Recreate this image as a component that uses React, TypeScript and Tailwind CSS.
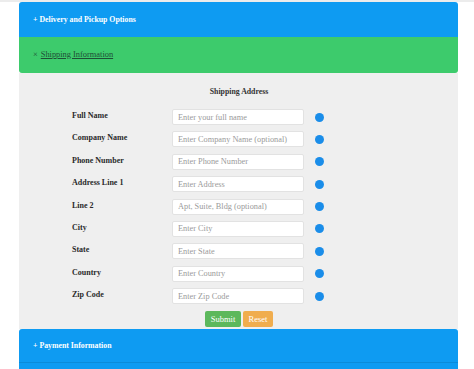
import React from 'react';

const fields = [
  { label: 'Full Name', placeholder: 'Enter your full name' },
  { label: 'Company Name', placeholder: 'Enter Company Name (optional)' },
  { label: 'Phone Number', placeholder: 'Enter Phone Number' },
  { label: 'Address Line 1', placeholder: 'Enter Address' },
  { label: 'Line 2', placeholder: 'Apt, Suite, Bldg (optional)' },
  { label: 'City', placeholder: 'Enter City' },
  { label: 'State', placeholder: 'Enter State' },
  { label: 'Country', placeholder: 'Enter Country' },
  { label: 'Zip Code', placeholder: 'Enter Zip Code' },
];

const App: React.FC = () => {
  return (
    <div
      className="w-[474px] h-[369px] overflow-hidden bg-white"
      style={{ fontFamily: '"Liberation Serif", "DejaVu Serif", serif' }}
    >
      <div className="h-[2px] bg-[#ececec]" />
      <div className="ml-[19px] w-[439px]">
        {/* Delivery header */}
        <div className="h-[35px] bg-[#0e9bf2] rounded-t-[3px] flex items-center pl-[14px] text-white font-bold text-[7.8px]">
          + Delivery and Pickup Options
        </div>

        {/* Shipping header */}
        <div className="h-[36px] bg-[#3dcb6c] rounded-b-[3px] flex items-center pl-[14px] text-[#1f4f36] text-[8.4px]">
          <span className="mr-[3px]">×</span>
          <span className="underline">Shipping Information</span>
        </div>

        {/* Body */}
        <div className="h-[256px] bg-[#efefef] pt-[13px]">
          <div className="text-center font-bold text-[7.8px] text-[#333] leading-[12px] pl-[1px]">Shipping Address</div>
          <div className="mt-[11px] pl-[53px] flex flex-col gap-y-[6.375px]">
            {fields.map(f => (
              <div key={f.label} className="flex items-center h-[16px]">
                <div className="w-[100px] font-bold text-[8px] text-[#2a2a2a] leading-[12px] -mt-[2px]">{f.label}</div>
                <input
                  placeholder={f.placeholder}
                  className="w-[132px] h-[16px] bg-white border border-[#e2e2e2] rounded-[2px] px-[5px] text-[8.3px] placeholder:text-[#9a9a9a] outline-none"
                  style={{ fontFamily: '"Liberation Serif", "DejaVu Serif", serif' }}
                />
                <span className="ml-[11px] w-[9px] h-[9px] rounded-full bg-[#1a8de9]" />
              </div>
            ))}
          </div>
          <div className="mt-[7px] flex justify-center gap-[2px] pl-[1px]">
            <button className="w-[36px] h-[16px] bg-[#5cb85c] text-white text-[8.5px] rounded-[2px]">Submit</button>
            <button className="w-[30px] h-[16px] bg-[#f0ad4e] text-white text-[8.5px] rounded-[2px]">Reset</button>
          </div>
        </div>

        {/* Payment header */}
        <div className="h-[33px] bg-[#0e9bf2] rounded-t-[3px] flex items-center pl-[14px] text-white font-bold text-[7.8px]">
          + Payment Information
        </div>
        <div className="h-[1px] bg-[#0b8bd9]" />
        <div className="h-[10px] bg-[#0e9bf2]" />
      </div>
    </div>
  );
};

export default App;
